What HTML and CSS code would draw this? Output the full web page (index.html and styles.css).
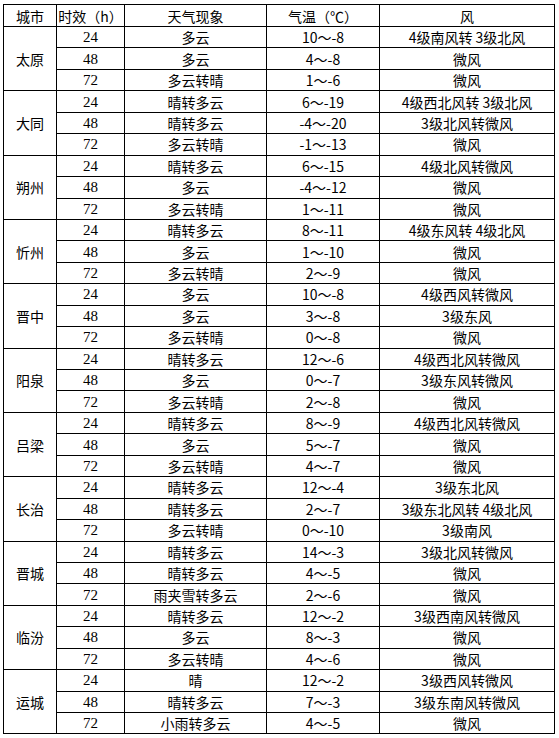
FILE: index.html
```html
<!DOCTYPE html>
<html lang="zh-CN">
<head>
<meta charset="utf-8">
<title>山西天气预报</title>
<link rel="stylesheet" href="styles.css">
</head>
<body>
<table class="wx">
<colgroup>
<col class="c-city"><col class="c-hr"><col class="c-wx"><col class="c-tmp"><col class="c-wind">
</colgroup>
<thead>
<tr><th>城市</th><th>时效（h）</th><th>天气现象</th><th>气温（℃）</th><th>风</th></tr>
</thead>
<tbody>
<tr><td class="city" rowspan="3">太原</td><td class="hr">24</td><td>多云</td><td>10～-8</td><td>4级南风转 3级北风</td></tr>
<tr><td class="hr">48</td><td>多云</td><td>4～-8</td><td>微风</td></tr>
<tr><td class="hr">72</td><td>多云转晴</td><td>1～-6</td><td>微风</td></tr>
<tr><td class="city" rowspan="3">大同</td><td class="hr">24</td><td>晴转多云</td><td>6～-19</td><td>4级西北风转 3级北风</td></tr>
<tr><td class="hr">48</td><td>晴转多云</td><td>-4～-20</td><td>3级北风转微风</td></tr>
<tr><td class="hr">72</td><td>多云转晴</td><td>-1～-13</td><td>微风</td></tr>
<tr><td class="city" rowspan="3">朔州</td><td class="hr">24</td><td>晴转多云</td><td>6～-15</td><td>4级北风转微风</td></tr>
<tr><td class="hr">48</td><td>多云</td><td>-4～-12</td><td>微风</td></tr>
<tr><td class="hr">72</td><td>多云转晴</td><td>1～-11</td><td>微风</td></tr>
<tr><td class="city" rowspan="3">忻州</td><td class="hr">24</td><td>晴转多云</td><td>8～-11</td><td>4级东风转 4级北风</td></tr>
<tr><td class="hr">48</td><td>多云</td><td>1～-10</td><td>微风</td></tr>
<tr><td class="hr">72</td><td>多云转晴</td><td>2～-9</td><td>微风</td></tr>
<tr><td class="city" rowspan="3">晋中</td><td class="hr">24</td><td>多云</td><td>10～-8</td><td>4级西风转微风</td></tr>
<tr><td class="hr">48</td><td>多云</td><td>3～-8</td><td>3级东风</td></tr>
<tr><td class="hr">72</td><td>多云转晴</td><td>0～-8</td><td>微风</td></tr>
<tr><td class="city" rowspan="3">阳泉</td><td class="hr">24</td><td>晴转多云</td><td>12～-6</td><td>4级西北风转微风</td></tr>
<tr><td class="hr">48</td><td>多云</td><td>0～-7</td><td>3级东风转微风</td></tr>
<tr><td class="hr">72</td><td>多云转晴</td><td>2～-8</td><td>微风</td></tr>
<tr><td class="city" rowspan="3">吕梁</td><td class="hr">24</td><td>晴转多云</td><td>8～-9</td><td>4级西北风转微风</td></tr>
<tr><td class="hr">48</td><td>多云</td><td>5～-7</td><td>微风</td></tr>
<tr><td class="hr">72</td><td>多云转晴</td><td>4～-7</td><td>微风</td></tr>
<tr><td class="city" rowspan="3">长治</td><td class="hr">24</td><td>晴转多云</td><td>12～-4</td><td>3级东北风</td></tr>
<tr><td class="hr">48</td><td>晴转多云</td><td>2～-7</td><td>3级东北风转 4级北风</td></tr>
<tr><td class="hr">72</td><td>多云转晴</td><td>0～-10</td><td>3级南风</td></tr>
<tr><td class="city" rowspan="3">晋城</td><td class="hr">24</td><td>晴转多云</td><td>14～-3</td><td>3级北风转微风</td></tr>
<tr><td class="hr">48</td><td>晴转多云</td><td>4～-5</td><td>微风</td></tr>
<tr><td class="hr">72</td><td>雨夹雪转多云</td><td>2～-6</td><td>微风</td></tr>
<tr><td class="city" rowspan="3">临汾</td><td class="hr">24</td><td>晴转多云</td><td>12～-2</td><td>3级西南风转微风</td></tr>
<tr><td class="hr">48</td><td>多云</td><td>8～-3</td><td>微风</td></tr>
<tr><td class="hr">72</td><td>多云转晴</td><td>4～-6</td><td>微风</td></tr>
<tr><td class="city" rowspan="3">运城</td><td class="hr">24</td><td>晴</td><td>12～-2</td><td>3级西风转微风</td></tr>
<tr><td class="hr">48</td><td>晴转多云</td><td>7～-3</td><td>3级东南风转微风</td></tr>
<tr><td class="hr">72</td><td>小雨转多云</td><td>4～-5</td><td>微风</td></tr>
</tbody>
</table>
</body>
</html>
```
FILE: styles.css
```css
html, body {
  margin: 0;
  padding: 0;
  background: #ffffff;
}
body {
  padding: 4px 0 0 3px;
  font-family: "Noto Sans CJK SC", "Noto Sans", sans-serif;
  font-size: 14px;
  color: #000000;
}
.wx {
  border-collapse: collapse;
  table-layout: fixed;
  width: 551px;
}
.c-city { width: 53px; }
.c-hr { width: 68px; }
.c-wx { width: 142px; }
.c-tmp { width: 113px; }
.c-wind { width: 175px; }
.wx th,
.wx td {
  border: 1px solid #000000;
  padding: 0;
  height: 20.45px;
  line-height: 18px;
  text-align: center;
  vertical-align: middle;
  font-weight: normal;
  white-space: nowrap;
}
.wx th {
  height: 21px;
}
.wx td.hr {
  font-family: "Liberation Serif", serif;
  font-size: 15px;
}
```
